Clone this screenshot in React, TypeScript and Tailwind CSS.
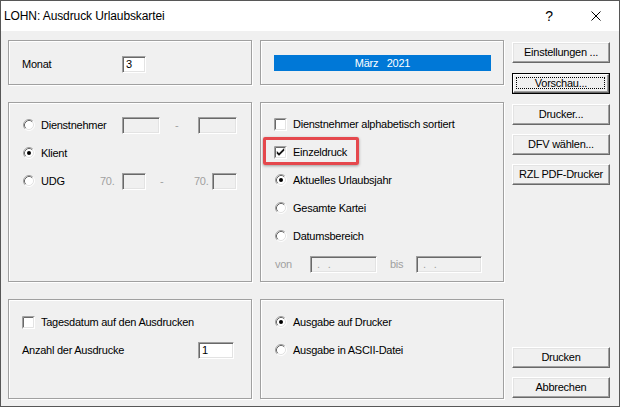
import React from "react";

const Radio = ({ checked = false }: { checked?: boolean }) => (
  <span className="w-[13px] h-[13px] flex items-center justify-end shrink-0">
    <svg width="12" height="12" viewBox="0 0 12 12">
      <circle cx="6" cy="6" r="5" fill="#fff" />
      <path d="M2.11 9.89A5.5 5.5 0 0 1 9.89 2.11" stroke="#a0a0a0" fill="none" />
      <path d="M2.82 9.18A4.5 4.5 0 0 1 9.18 2.82" stroke="#696969" fill="none" />
      <path d="M9.89 2.11A5.5 5.5 0 0 1 2.11 9.89" stroke="#ffffff" fill="none" />
      <path d="M9.18 2.82A4.5 4.5 0 0 1 2.82 9.18" stroke="#e3e3e3" fill="none" />
      {checked && <circle cx="6" cy="6" r="2" fill="#000" />}
    </svg>
  </span>
);

const Check = ({ checked = false }: { checked?: boolean }) => (
  <svg width="13" height="13" viewBox="0 0 13 13" className="shrink-0">
    <rect x="0" y="0" width="13" height="13" fill="#ffffff" />
    <path d="M0.5 12.5V0.5H12.5" stroke="#a0a0a0" fill="none" />
    <path d="M1.5 11.5V1.5H11.5" stroke="#696969" fill="none" />
    <path d="M1.5 11.5H11.5V1.5" stroke="#e3e3e3" fill="none" />
    <rect x="2" y="2" width="9" height="9" fill="#ffffff" />
    {checked && (
      <path d="M3 5.5L5 7.5L10 2.5V4.5L5 9.5L3 7.5Z" fill="#000" stroke="#000" strokeWidth="0.4" />
    )}
  </svg>
);

const sunken =
  "box-border h-[17px] border border-t-[#a0a0a0] border-l-[#a0a0a0] border-r-white border-b-white shadow-[inset_1px_1px_0_#696969,inset_-1px_-1px_0_#e3e3e3] flex items-center";

const etched =
  "box-border border border-[#a0a0a0] shadow-[inset_1px_1px_0_#ffffff,1px_1px_0_#ffffff]";

const btn3d =
  "box-border w-[98px] h-[21px] bg-[#f0f0f0] border border-t-white border-l-white border-r-[#696969] border-b-[#696969] shadow-[inset_-1px_-1px_0_#a0a0a0,inset_1px_1px_0_#e3e3e3] flex items-center justify-center text-black";

export default function App() {
  return (
    <div className="w-[620px] h-[407px] box-border border border-[#575757] bg-[#f0f0f0] flex flex-col font-['Liberation_Sans',Arial,sans-serif] text-[11px] tracking-[-0.25px] text-black leading-none select-none overflow-hidden">
      {/* Title bar */}
      <div className="h-[30px] shrink-0 bg-white flex items-center pl-[3px]">
        <span className="text-[12px] tracking-[-0.1px]">LOHN: Ausdruck Urlaubskartei</span>
        <span className="ml-auto text-[14px] tracking-normal">?</span>
        <svg width="10" height="10" viewBox="0 0 10 10" className="ml-[38px] mr-[18px]">
          <path d="M0.5 0.5L9.5 9.5M9.5 0.5L0.5 9.5" stroke="#000" strokeWidth="1" />
        </svg>
      </div>

      {/* Content */}
      <div className="flex flex-1 pl-[7px] pt-[9px]">
        {/* Left column */}
        <div className="w-[244px] flex flex-col">
          <div className={`${etched} h-[45px] flex items-center pl-[13px] pt-[3px]`}>
            <span className="w-[100px]">Monat</span>
            <div className={`${sunken} w-[24px] bg-white pl-[3px]`}>3</div>
          </div>

          <div className={`${etched} h-[180px] mt-[17px] flex flex-col pl-[13px] pt-[8px]`}>
            <div className="h-[28px] flex items-center">
              <div className="w-[100px] flex items-center gap-[6px]">
                <Radio />
                <span>Dienstnehmer</span>
              </div>
              <div className={`${sunken} w-[38px] bg-[#f0f0f0]`} />
              <div className="w-[38px] pl-[15px] text-[#a0a0a0]">-</div>
              <div className={`${sunken} w-[39px] bg-[#f0f0f0]`} />
            </div>
            <div className="h-[28px] flex items-center gap-[6px]">
              <Radio checked />
              <span>Klient</span>
            </div>
            <div className="h-[28px] flex items-center">
              <div className="w-[78px] flex items-center gap-[6px]">
                <Radio />
                <span>UDG</span>
              </div>
              <div className="w-[22px] text-[#a0a0a0]">70.</div>
              <div className={`${sunken} w-[24px] bg-[#f0f0f0]`} />
              <div className="w-[48px] pl-[14px] text-[#a0a0a0]">-</div>
              <div className="w-[18px] text-[#a0a0a0]">70.</div>
              <div className={`${sunken} w-[25px] bg-[#f0f0f0]`} />
            </div>
          </div>

          <div className={`${etched} h-[100px] mt-[17px] flex flex-col pl-[13px] pt-[8px]`}>
            <div className="h-[28px] flex items-center gap-[6px]">
              <Check />
              <span>Tagesdatum auf den Ausdrucken</span>
            </div>
            <div className="h-[28px] flex items-center">
              <span className="w-[176px]">Anzahl der Ausdrucke</span>
              <div className={`${sunken} w-[36px] bg-white pl-[3px]`}>1</div>
            </div>
          </div>
        </div>

        {/* Right column */}
        <div className="w-[244px] ml-[8px] flex flex-col">
          <div className={`${etched} h-[45px] pl-[13px] pt-[14px]`}>
            <div className="w-[217px] h-[16px] bg-[#0078d7] text-white flex items-center justify-center whitespace-pre">
              {"März   2021"}
            </div>
          </div>

          <div className={`${etched} h-[180px] mt-[17px] flex flex-col pl-[13px] pt-[7px]`}>
            <div className="h-[28px] flex items-center gap-[6px]">
              <Check />
              <span>Dienstnehmer alphabetisch sortiert</span>
            </div>
            <div className="h-[28px] flex items-center gap-[6px] relative">
              <Check checked />
              <span>Einzeldruck</span>
              <div className="absolute left-[-11px] top-[-1px] w-[96px] h-[28px] box-border border-[3px] border-[#e5484d] rounded-[2px] shadow-[0_1px_3px_rgba(0,0,0,0.35)]" />
            </div>
            <div className="h-[28px] flex items-center gap-[6px]">
              <Radio checked />
              <span>Aktuelles Urlaubsjahr</span>
            </div>
            <div className="h-[28px] flex items-center gap-[6px]">
              <Radio />
              <span>Gesamte Kartei</span>
            </div>
            <div className="h-[28px] flex items-center gap-[6px]">
              <Radio />
              <span>Datumsbereich</span>
            </div>
            <div className="h-[28px] flex items-center">
              <span className="w-[36px] text-[#a0a0a0] pl-[1px]">von</span>
              <div className={`${sunken} w-[67px] bg-[#f0f0f0] text-[#a0a0a0]`}>
                <span className="ml-[6px]">.</span>
                <span className="ml-[8px]">.</span>
              </div>
              <span className="w-[39px] pl-[13px] text-[#a0a0a0]">bis</span>
              <div className={`${sunken} w-[66px] bg-[#f0f0f0] text-[#a0a0a0]`}>
                <span className="ml-[6px]">.</span>
                <span className="ml-[8px]">.</span>
              </div>
            </div>
          </div>

          <div className={`${etched} h-[100px] mt-[17px] flex flex-col pl-[13px] pt-[8px]`}>
            <div className="h-[28px] flex items-center gap-[6px]">
              <Radio checked />
              <span>Ausgabe auf Drucker</span>
            </div>
            <div className="h-[28px] flex items-center gap-[6px]">
              <Radio />
              <span>Ausgabe in ASCII-Datei</span>
            </div>
          </div>
        </div>

        {/* Buttons */}
        <div className="w-[98px] ml-[8px] flex flex-col justify-between pb-[8px]">
          <div className="flex flex-col">
            <div className={`${btn3d} mt-[2px]`}>Einstellungen ...</div>
            <div className="mt-[10px] box-border w-[98px] h-[21px] border border-black">
              <div className="box-border w-full h-full bg-[#f0f0f0] border border-t-white border-l-white border-r-[#696969] border-b-[#696969] shadow-[inset_-1px_-1px_0_#a0a0a0] relative flex items-center justify-center">
                <span>Vorschau...</span>
                <div className="absolute left-[2px] top-[2px] right-[3px] bottom-[3px] border border-dotted border-black" />
              </div>
            </div>
            <div className={`${btn3d} mt-[10px]`}>Drucker...</div>
            <div className={`${btn3d} mt-[9px]`}>DFV wählen...</div>
            <div className={`${btn3d} mt-[9px]`}>RZL PDF-Drucker</div>
          </div>
          <div className="flex flex-col">
            <div className={btn3d}>Drucken</div>
            <div className={`${btn3d} mt-[9px]`}>Abbrechen</div>
          </div>
        </div>
      </div>
    </div>
  );
}
